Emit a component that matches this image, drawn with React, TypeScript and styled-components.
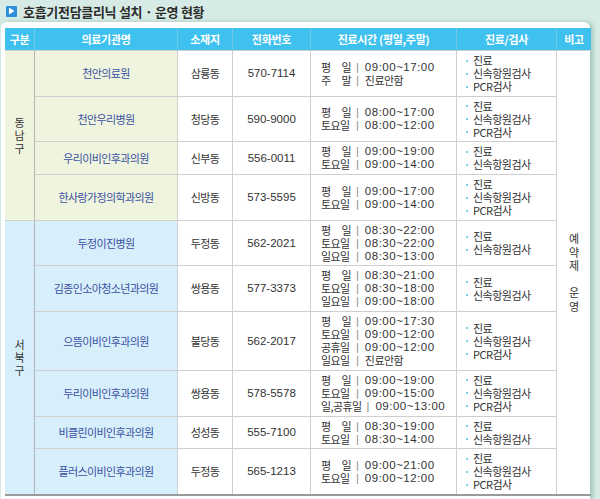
import React from 'react';
import styled, { createGlobalStyle } from 'styled-components';

const GlobalStyle = createGlobalStyle`
  html, body {
    margin: 0;
    padding: 0;
    background: #d6ebe5;
  }
  body {
    font-family: "Liberation Sans", "Noto Sans CJK KR", sans-serif;
    color: #333;
  }
`;

type Hour = { label: string; time: string };

type Clinic = {
  name: string;
  place: string;
  phone: string;
  hours: Hour[];
  services: string[];
};

type District = {
  name: string;
  tone: 'green' | 'blue';
  clinics: Clinic[];
};

const FULL = ['진료', '신속항원검사', 'PCR검사'];
const BASIC = ['진료', '신속항원검사'];

const districts: District[] = [
  {
    name: '동남구',
    tone: 'green',
    clinics: [
      {
        name: '천안의료원',
        place: '삼룡동',
        phone: '570-7114',
        hours: [
          { label: '평 일', time: '09:00~17:00' },
          { label: '주 말', time: '진료안함' },
        ],
        services: FULL,
      },
      {
        name: '천안우리병원',
        place: '청당동',
        phone: '590-9000',
        hours: [
          { label: '평 일', time: '08:00~17:00' },
          { label: '토요일', time: '08:00~12:00' },
        ],
        services: FULL,
      },
      {
        name: '우리이비인후과의원',
        place: '신부동',
        phone: '556-0011',
        hours: [
          { label: '평 일', time: '09:00~19:00' },
          { label: '토요일', time: '09:00~14:00' },
        ],
        services: BASIC,
      },
      {
        name: '한사랑가정의학과의원',
        place: '신방동',
        phone: '573-5595',
        hours: [
          { label: '평 일', time: '09:00~17:00' },
          { label: '토요일', time: '09:00~14:00' },
        ],
        services: FULL,
      },
    ],
  },
  {
    name: '서북구',
    tone: 'blue',
    clinics: [
      {
        name: '두정이진병원',
        place: '두정동',
        phone: '562-2021',
        hours: [
          { label: '평 일', time: '08:30~22:00' },
          { label: '토요일', time: '08:30~22:00' },
          { label: '일요일', time: '08:30~13:00' },
        ],
        services: BASIC,
      },
      {
        name: '김종인소아청소년과의원',
        place: '쌍용동',
        phone: '577-3373',
        hours: [
          { label: '평 일', time: '08:30~21:00' },
          { label: '토요일', time: '08:30~18:00' },
          { label: '일요일', time: '09:00~18:00' },
        ],
        services: BASIC,
      },
      {
        name: '으뜸이비인후과의원',
        place: '불당동',
        phone: '562-2017',
        hours: [
          { label: '평 일', time: '09:00~17:30' },
          { label: '토요일', time: '09:00~12:00' },
          { label: '공휴일', time: '09:00~12:00' },
          { label: '일요일', time: '진료안함' },
        ],
        services: FULL,
      },
      {
        name: '두리이비인후과의원',
        place: '쌍용동',
        phone: '578-5578',
        hours: [
          { label: '평 일', time: '09:00~19:00' },
          { label: '토요일', time: '09:00~15:00' },
          { label: '일,공휴일', time: '09:00~13:00' },
        ],
        services: FULL,
      },
      {
        name: '비클린이비인후과의원',
        place: '성성동',
        phone: '555-7100',
        hours: [
          { label: '평 일', time: '08:30~19:00' },
          { label: '토요일', time: '08:30~14:00' },
        ],
        services: BASIC,
      },
      {
        name: '플러스이비인후과의원',
        place: '두정동',
        phone: '565-1213',
        hours: [
          { label: '평 일', time: '09:00~21:00' },
          { label: '토요일', time: '09:00~12:00' },
        ],
        services: FULL,
      },
    ],
  },
];

const totalRows = districts.reduce((n, d) => n + d.clinics.length, 0);

const tones = {
  green: '#eef4dd',
  blue: '#d7effb',
};

const Page = styled.div`
  height: 499px;
  overflow: hidden;
  display: flex;
  flex-direction: column;
`;

const TitleBar = styled.div`
  height: 22px;
  display: flex;
  align-items: center;
  gap: 6px;
  padding-left: 6px;
`;

const TitleIcon = styled.span`
  width: 11px;
  height: 11px;
  border-radius: 1px;
  background: #2b8ed8;
  display: flex;
  align-items: center;
  justify-content: center;
`;

const Title = styled.h1`
  margin: 0;
  font-family: "Noto Sans CJK KR", sans-serif;
  font-size: 13px;
  font-weight: 700;
  letter-spacing: -0.3px;
  color: #2c2c2c;
`;

const Card = styled.div`
  flex: 1;
  margin-left: 1px;
  width: 589px;
  box-sizing: border-box;
  background: #fff;
  border-radius: 6px 6px 0 0;
  padding: 6px 0 0 4px;
  box-shadow: 3px 0 4px rgba(70, 130, 110, 0.35);
`;

const Table = styled.table`
  width: 580px;
  border-collapse: collapse;
  table-layout: fixed;
  border-bottom: 2px solid #9a9a9a;
`;

const Head = styled.th<{ $w: number }>`
  width: ${(p) => p.$w}px;
  height: 22px;
  padding: 0;
  background: #3ec1ee;
  color: #fff;
  font-family: "Noto Sans CJK KR", sans-serif;
  font-size: 11px;
  font-weight: 700;
  letter-spacing: -0.3px;
  border-left: 1px solid #6ec9ea;
  &:first-child {
    border-left: none;
  }
`;

const Cell = styled.td`
  padding: 3px 0 2.7px;
  border: 1px solid #cfcfcf;
  vertical-align: middle;
  font-size: 11px;
  line-height: 13px;
`;

const GroupCell = styled(Cell)<{ $tone: 'green' | 'blue' }>`
  background: ${(p) => tones[p.$tone]};
  border-left: none;
  border-right: 1px solid #b5b5b5;
  text-align: center;
  font-family: "Noto Sans CJK KR", sans-serif;
  color: #333;
`;

const Stack = styled.div`
  display: flex;
  flex-direction: column;
  align-items: center;
`;

const StackChar = styled.span<{ $step: number }>`
  display: block;
  height: ${(p) => p.$step}px;
  line-height: ${(p) => p.$step}px;
`;

const NameCell = styled(Cell)<{ $tone: 'green' | 'blue' }>`
  background: ${(p) => tones[p.$tone]};
  text-align: center;
  color: #3a50a2;
  font-family: "Noto Sans CJK KR", sans-serif;
  letter-spacing: -0.6px;
`;

const PlaceCell = styled(Cell)`
  text-align: center;
  font-family: "Noto Sans CJK KR", sans-serif;
  letter-spacing: -0.6px;
`;

const PhoneCell = styled(Cell)`
  text-align: center;
  font-size: 11.5px;
`;

const HoursCell = styled(Cell)`
  padding-left: 10px;
  white-space: nowrap;
`;

const HourLine = styled.div`
  display: flex;
  align-items: center;
  height: 13px;
  line-height: 13px;
`;

const Label = styled.span<{ $wide: boolean }>`
  display: inline-block;
  width: ${(p) => (p.$wide ? 'auto' : '30px')};
  text-align: justify;
  text-align-last: justify;
  font-family: "Noto Sans CJK KR", sans-serif;
  letter-spacing: -0.6px;
`;

const Sep = styled.span`
  color: #8a8a8a;
  margin: 0 6px 0 5px;
`;

const Time = styled.span<{ $korean: boolean }>`
  font-size: ${(p) => (p.$korean ? '11px' : '11.5px')};
  letter-spacing: ${(p) => (p.$korean ? '-0.6px' : '0.5px')};
  font-family: ${(p) => (p.$korean ? '"Noto Sans CJK KR", sans-serif' : 'inherit')};
`;

const ServiceCell = styled(Cell)`
  padding-left: 9px;
`;

const Service = styled.div`
  display: flex;
  align-items: center;
  height: 13px;
  line-height: 13px;
  font-family: "Noto Sans CJK KR", sans-serif;
  letter-spacing: -0.5px;
  &::before {
    content: '';
    width: 2px;
    height: 2px;
    border-radius: 1px;
    background: #4cbde8;
    margin-right: 5px;
  }
`;

const NoteCell = styled(Cell)`
  border-right: none;
  text-align: center;
  font-family: "Noto Sans CJK KR", sans-serif;
`;

function Vertical({ text, step }: { text: string; step: number }) {
  return (
    <Stack>
      {text.split('').map((ch, i) => (
        <StackChar key={i} $step={step}>
          {ch === ' ' ? '\u00a0' : ch}
        </StackChar>
      ))}
    </Stack>
  );
}

const headers: [string, number][] = [
  ['구분', 29],
  ['의료기관명', 142],
  ['소재지', 54],
  ['전화번호', 77],
  ['진료시간 (평일,주말)', 145],
  ['진료/검사', 99],
  ['비고', 34],
];

function App() {
  let rowIndex = 0;

  return (
    <Page>
      <GlobalStyle />
      <TitleBar>
        <TitleIcon>
          <svg width="7" height="8" viewBox="0 0 7 8">
            <path d="M1 0.5 L6.5 4 L1 7.5 Z" fill="#fff" />
          </svg>
        </TitleIcon>
        <Title>호흡기전담클리닉 설치 · 운영 현황</Title>
      </TitleBar>
      <Card>
        <Table>
          <thead>
            <tr>
              {headers.map(([h, w]) => (
                <Head key={h} $w={w}>
                  {h}
                </Head>
              ))}
            </tr>
          </thead>
          <tbody>
            {districts.map((d) =>
              d.clinics.map((c, i) => {
                const first = rowIndex === 0;
                rowIndex += 1;
                return (
                  <tr key={c.name}>
                    {i === 0 && (
                      <GroupCell $tone={d.tone} rowSpan={d.clinics.length}>
                        <Vertical text={d.name} step={13} />
                      </GroupCell>
                    )}
                    <NameCell $tone={d.tone}>{c.name}</NameCell>
                    <PlaceCell>{c.place}</PlaceCell>
                    <PhoneCell>{c.phone}</PhoneCell>
                    <HoursCell>
                      {c.hours.map((h) => (
                        <HourLine key={h.label}>
                          <Label $wide={h.label.length > 3}>{h.label}</Label>
                          <Sep>|</Sep>
                          <Time $korean={!/\d/.test(h.time)}>{h.time}</Time>
                        </HourLine>
                      ))}
                    </HoursCell>
                    <ServiceCell>
                      {c.services.map((s) => (
                        <Service key={s}>{s}</Service>
                      ))}
                    </ServiceCell>
                    {first && (
                      <NoteCell rowSpan={totalRows}>
                        <Vertical text="예약제 운영" step={13.5} />
                      </NoteCell>
                    )}
                  </tr>
                );
              })
            )}
          </tbody>
        </Table>
      </Card>
    </Page>
  );
}

export default App;
